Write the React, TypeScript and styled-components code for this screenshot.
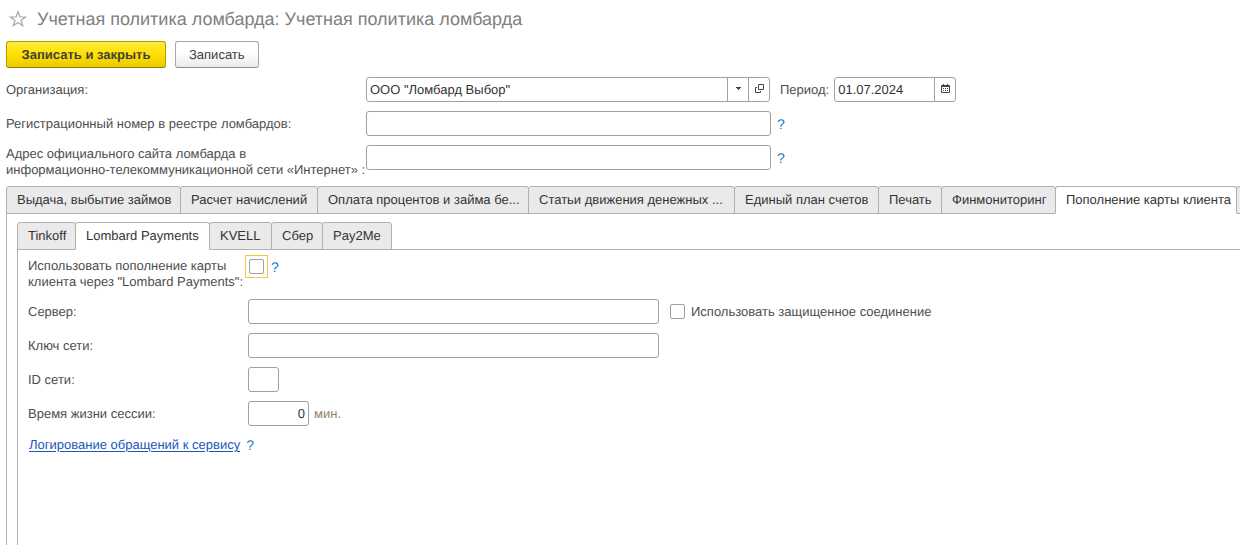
import React, { useState } from "react";
import styled, { createGlobalStyle, css } from "styled-components";

const GlobalStyle = createGlobalStyle`
  *, *::before, *::after { box-sizing: border-box; }
  html, body, #root { height: 100%; }
  body {
    margin: 0;
    overflow: hidden;
    background: #fff;
    color: #4d4d4d;
    font: 13px/16px "Liberation Sans", Arial, sans-serif;
    text-rendering: geometricPrecision;
  }
  button, input { font: inherit; text-rendering: inherit; }
`;

const Page = styled.main`
  display: flex;
  flex-direction: column;
  min-height: 100%;
  padding: 8px 0 0 6px;
`;

const Header = styled.header`
  display: flex;
  align-items: center;
  gap: 9px;
  height: 22px;
  padding-left: 2px;
`;

const StarButton = styled.button`
  display: flex;
  padding: 0;
  border: 0;
  background: none;
`;

const Title = styled.h1`
  margin: 0;
  color: #808080;
  font-size: 18px;
  font-weight: 400;
  line-height: 22px;
  white-space: nowrap;
`;

const Toolbar = styled.div`
  display: flex;
  gap: 9px;
  margin-top: 11px;
`;

const ToolButton = styled.button<{ $primary?: boolean }>`
  height: 27px;
  padding: 0 13px;
  border: 1px solid #a8a8a8;
  border-bottom-color: #8f8f8f;
  border-radius: 3px;
  background: linear-gradient(#fff 40%, #ebebeb);
  color: #404040;
  white-space: nowrap;
  ${(p) =>
    p.$primary &&
    css`
      min-width: 160px;
      border-color: #b39b00;
      border-bottom-color: #8f7c00;
      background: linear-gradient(#ffea3d, #ffe000 50%, #ebca00);
      font-weight: 700;
    `}
`;

const Fields = styled.div<{ $label: number }>`
  display: grid;
  grid-template-columns: ${(p) => p.$label}px 1fr;
  row-gap: 9px;
  align-items: start;
`;

const TopFields = styled(Fields)`
  margin: 9px 0 8px;
`;

const FieldLabel = styled.label<{ $tall?: boolean }>`
  padding-top: ${(p) => (p.$tall ? 1 : 5)}px;
  white-space: pre;
`;

const Line = styled.div`
  display: flex;
  align-items: center;
  min-height: 25px;
`;

const CheckLine = styled(Line)`
  margin: -3px 0 0 -3px;
`;

const TextBox = styled.input<{ $width: number; $right?: boolean }>`
  width: ${(p) => p.$width}px;
  height: 25px;
  padding: 0 3px;
  border: 1px solid #a0a0a0;
  border-radius: 3px;
  background: #fff;
  color: #333;
  text-align: ${(p) => (p.$right ? "right" : "left")};
  outline: none;
`;

const Combo = styled.div<{ $width: number }>`
  display: flex;
  width: ${(p) => p.$width}px;
  height: 25px;
  border: 1px solid #a0a0a0;
  border-radius: 3px;
  background: #fff;
`;

const ComboInput = styled.input`
  flex: 1;
  min-width: 0;
  padding: 0 3px;
  border: 0;
  background: none;
  color: #333;
  outline: none;
`;

const ComboButton = styled.button`
  display: flex;
  align-items: center;
  justify-content: center;
  width: 21px;
  padding: 0 0 2px;
  border: 0;
  border-left: 1px solid #a0a0a0;
  background: none;
`;

const SideLabel = styled.label`
  margin: 0 5px 0 10px;
`;

const SecureLabel = styled.label`
  display: flex;
  align-items: center;
  gap: 6px;
  margin-left: 11px;
`;

const Help = styled.button<{ $near?: boolean }>`
  margin-left: ${(p) => (p.$near ? 3 : 6)}px;
  padding: 0;
  border: 0;
  background: none;
  color: #0b77bd;
  font-size: 14px;
  line-height: 16px;
`;

const TabList = styled.div`
  display: flex;
  height: 28px;
`;

const Tab = styled.button<{ $active?: boolean; $width: number }>`
  flex: none;
  width: ${(p) => p.$width}px;
  margin-right: -1px;
  padding: 0 0 0 10px;
  border: 1px solid #b0b0b0;
  border-bottom-color: ${(p) => (p.$active ? "#fff" : "#b0b0b0")};
  border-radius: 3px 3px 0 0;
  background: ${(p) => (p.$active ? "#fff" : "#eaeaea")};
  color: #333;
  text-align: left;
  white-space: nowrap;
`;

/* The selected tab covers the top border of the panel under it. */
const ActiveTab = styled(Tab)`
  position: relative;
  z-index: 1;
`;

const Panel = styled.div`
  display: flex;
  flex: 1;
  flex-direction: column;
  margin-top: -1px;
  padding: 8px 0 0 10px;
  border: solid #b0b0b0;
  border-width: 1px 0 0 1px;
`;

const InnerPanel = styled(Panel)`
  padding-top: 7px;
`;

const CheckFrame = styled.span`
  display: flex;
  align-items: center;
  justify-content: center;
  width: 23px;
  height: 23px;
  border: 1px solid #f5c83c;
`;

const Check = styled.input.attrs({ type: "checkbox" })`
  width: 15px;
  height: 15px;
  margin: 0;
  appearance: none;
  border: 1px solid #a0a0a0;
  border-radius: 2px;
  background: #fff;
  &:checked { background: #666; }
`;

const Unit = styled.span`
  margin-left: 5px;
  color: #8c8468;
`;

const LogRow = styled.div`
  display: flex;
  margin-top: 11px;
  padding-left: 1px;
`;

const LogLink = styled.a`
  color: #1a56b8;
  text-decoration: underline;
  text-underline-offset: 2px;
`;

type TabItem = { label: string; width: number };

const mainTabs: TabItem[] = [
  { label: "Выдача, выбытие займов", width: 175 },
  { label: "Расчет начислений", width: 138 },
  { label: "Оплата процентов и займа бе...", width: 212 },
  { label: "Статьи движения денежных ...", width: 207 },
  { label: "Единый план счетов", width: 145 },
  { label: "Печать", width: 64 },
  { label: "Финмониторинг", width: 115 },
  { label: "Пополнение карты клиента", width: 182 },
  { label: "", width: 40 },
];

const cardTabs: TabItem[] = [
  { label: "Tinkoff", width: 59 },
  { label: "Lombard Payments", width: 135 },
  { label: "KVELL", width: 63 },
  { label: "Сбер", width: 52 },
  { label: "Pay2Me", width: 70 },
];

function Tabs({ items, initial, name }: { items: TabItem[]; initial: number; name: string }) {
  const [active, setActive] = useState(initial);
  return (
    <TabList role="tablist" aria-label={name}>
      {items.map((t, i) => {
        const Part = i === active ? ActiveTab : Tab;
        return (
          <Part
            key={i}
            type="button"
            role="tab"
            aria-selected={i === active}
            $active={i === active}
            $width={t.width}
            onClick={() => setActive(i)}
          >
            {t.label}
          </Part>
        );
      })}
    </TabList>
  );
}

const HelpButton = ({ near }: { near?: boolean }) => (
  <Help type="button" $near={near}>?</Help>
);

const StarIcon = () => (
  <svg width="20" height="20" viewBox="0 0 20 20" fill="none" stroke="#a3a9b0" strokeWidth="1.2">
    <path d="M10 2.500 11.900 8h5.600l-4.500 3.400 1.700 5.400-4.700-3.300-4.700 3.300 1.700-5.400L2.500 8h5.600z" />
  </svg>
);

const ArrowIcon = () => (
  <svg width="7" height="4" viewBox="0 0 7 4" fill="#444">
    <path d="M1 0h5v1H5v1H4v1H3V2H2V1H1z" />
  </svg>
);

const OpenIcon = () => (
  <svg width="9" height="9" viewBox="0 0 9 9" fill="none" stroke="#444">
    <path d="M3.500.5h5v5h-5zM2 3.500H.5v5h5V7" />
  </svg>
);

const CalendarIcon = () => (
  <svg width="9" height="9" viewBox="0 0 9 9" fill="none" stroke="#444">
    <path d="M.5 1.500h8v7h-8zM0 2.500h9M2.500 0v2M6.500 0v2" />
    <path d="M2 4.500h5M2 6.500h5" strokeDasharray="1 1" />
  </svg>
);

export default function App() {
  return (
    <>
      <GlobalStyle />
      <Page>
        <Header>
          <StarButton type="button" aria-label="Избранное"><StarIcon /></StarButton>
          <Title>Учетная политика ломбарда: Учетная политика ломбарда</Title>
        </Header>
        <Toolbar>
          <ToolButton type="button" $primary>Записать и закрыть</ToolButton>
          <ToolButton type="button">Записать</ToolButton>
        </Toolbar>
        <TopFields $label={360}>
          <FieldLabel htmlFor="org">Организация:</FieldLabel>
          <Line>
            <Combo $width={404}>
              <ComboInput id="org" defaultValue={'ООО "Ломбард Выбор"'} />
              <ComboButton type="button" aria-label="Выбрать"><ArrowIcon /></ComboButton>
              <ComboButton type="button" aria-label="Открыть"><OpenIcon /></ComboButton>
            </Combo>
            <SideLabel htmlFor="period">Период:</SideLabel>
            <Combo $width={122}>
              <ComboInput id="period" defaultValue="01.07.2024" />
              <ComboButton type="button" aria-label="Календарь"><CalendarIcon /></ComboButton>
            </Combo>
          </Line>
          <FieldLabel htmlFor="reg">Регистрационный номер в реестре ломбардов:</FieldLabel>
          <Line><TextBox id="reg" $width={405} /><HelpButton /></Line>
          <FieldLabel htmlFor="site" $tall>{"Адрес официального сайта ломбарда в\nинформационно-телекоммуникационной сети «Интернет» :"}</FieldLabel>
          <Line><TextBox id="site" $width={405} /><HelpButton /></Line>
        </TopFields>
        <Tabs items={mainTabs} initial={7} name="Разделы" />
        <Panel>
          <Tabs items={cardTabs} initial={1} name="Сервисы" />
          <InnerPanel>
            <Fields $label={220}>
              <FieldLabel htmlFor="use" $tall>{'Использовать пополнение карты\nклиента через "Lombard Payments":'}</FieldLabel>
              <CheckLine>
                <CheckFrame><Check id="use" /></CheckFrame><HelpButton near />
              </CheckLine>
              <FieldLabel htmlFor="server">Сервер:</FieldLabel>
              <Line>
                <TextBox id="server" $width={411} />
                <SecureLabel><Check />Использовать защищенное соединение</SecureLabel>
              </Line>
              <FieldLabel htmlFor="key">Ключ сети:</FieldLabel>
              <Line><TextBox id="key" $width={411} /></Line>
              <FieldLabel htmlFor="net">ID сети:</FieldLabel>
              <Line><TextBox id="net" $width={31} /></Line>
              <FieldLabel htmlFor="ttl">Время жизни сессии:</FieldLabel>
              <Line><TextBox id="ttl" $width={61} $right defaultValue="0" /><Unit>мин.</Unit></Line>
            </Fields>
            <LogRow><LogLink href="#log">Логирование обращений к сервису</LogLink><HelpButton /></LogRow>
          </InnerPanel>
        </Panel>
      </Page>
    </>
  );
}
